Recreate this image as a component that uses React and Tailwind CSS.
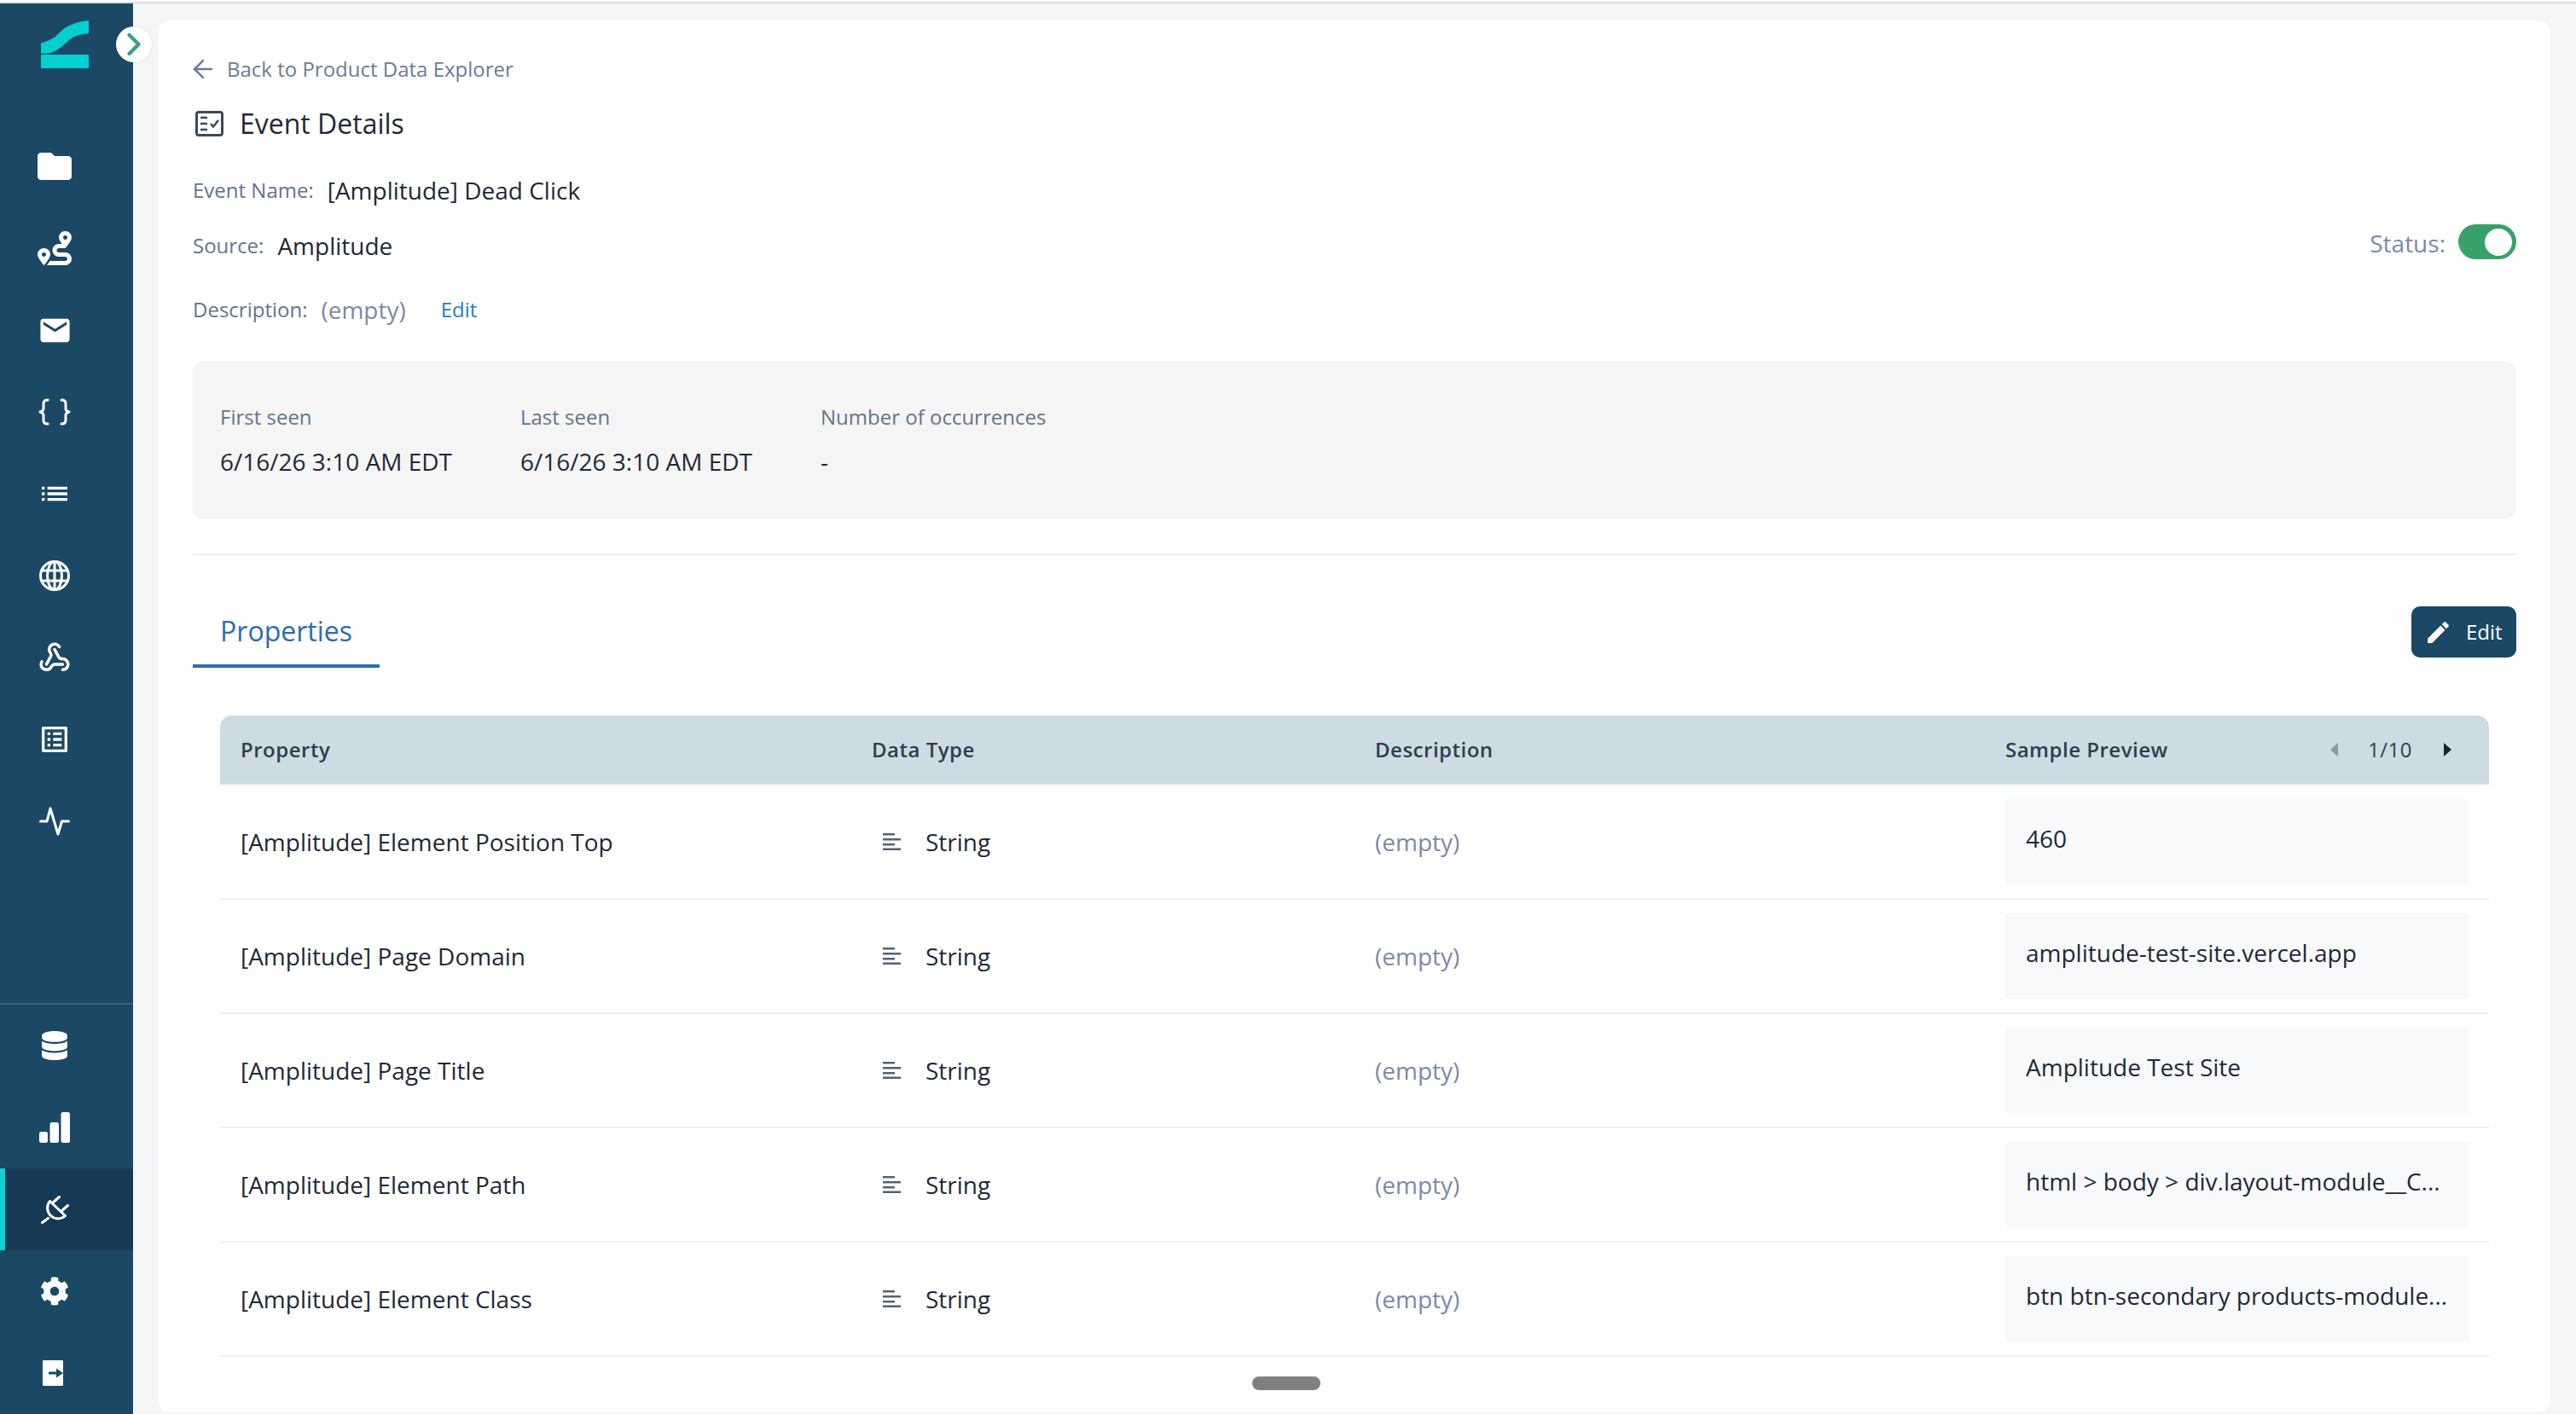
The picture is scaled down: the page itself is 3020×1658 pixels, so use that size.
import { ArrowLeft, ChevronRight, Webhook } from 'lucide-react'
import { FaRoute, FaDatabase, FaCog } from 'react-icons/fa'
import { MdFolder, MdEmail, MdList, MdListAlt, MdEdit } from 'react-icons/md'

const rows = [
  { name: '[Amplitude] Element Position Top', sample: '460' },
  { name: '[Amplitude] Page Domain', sample: 'amplitude-test-site.vercel.app' },
  { name: '[Amplitude] Page Title', sample: 'Amplitude Test Site' },
  { name: '[Amplitude] Element Path', sample: 'html > body > div.layout-module__C...' },
  { name: '[Amplitude] Element Class', sample: 'btn btn-secondary products-module...' },
]

function Logo() {
  return (
    <svg width="56" height="56" viewBox="0 0 56 56" fill="#03d0cf">
      <path d="M0 26.700C8 24 13 22 18 18C26 10 32 3 56 0V15.300C44 16 38 19 32 24C24 31 16 38.700 6 38.700H0Z" />
      <rect x="0" y="40" width="56" height="16" />
    </svg>
  )
}

function Braces() {
  return (
    <svg width="38" height="32" viewBox="0 0 38 32" fill="none" stroke="#fff" strokeWidth="3" strokeLinecap="round" strokeLinejoin="round">
      <path d="M11 2C7 2 6 3.5 6 6V12C6 14 4.5 15.5 2 16C4.5 16.5 6 18 6 20V26C6 28.5 7 30 11 30" />
      <path d="M27 2C31 2 32 3.500 32 6V12C32 14 33.500 15.500 36 16C33.500 16.500 32 18 32 20V26C32 28.500 31 30 27 30" />
    </svg>
  )
}

function Globe() {
  return (
    <svg width="36" height="36" viewBox="0 0 36 36" fill="none" stroke="#fff" strokeWidth="3">
      <circle cx="18" cy="18" r="16.500" />
      <ellipse cx="18" cy="18" rx="8.500" ry="16.500" />
      <path d="M18 2V34M3.500 12H32.500M3.500 24H32.500" />
    </svg>
  )
}

function Pulse() {
  return (
    <svg width="36" height="34" viewBox="0 0 36 34" fill="none" stroke="#fff" strokeWidth="3" strokeLinecap="round" strokeLinejoin="round">
      <path d="M1.500 17H9L13 2L22 32L26.500 17H34.500" />
    </svg>
  )
}

function Bars() {
  return (
    <svg width="36" height="36" viewBox="0 0 36 36" fill="#fff">
      <rect x="0" y="23" width="10" height="13" rx="2.500" />
      <rect x="12.500" y="12" width="10.500" height="24" rx="2.500" />
      <rect x="25.500" y="0" width="10.500" height="36" rx="2.500" />
    </svg>
  )
}

function PlugIcon() {
  return (
    <svg width="33" height="33" viewBox="-1.500 -1.500 33 33" fill="none" stroke="#fff" strokeWidth="3" strokeLinecap="round" strokeLinejoin="round">
      <path d="M27 22A12.400 12.400 0 0 1 9 5Z" />
      <path d="M12 7L20 0M22 17L30 10M7 25L0 30" />
    </svg>
  )
}

function ExitBox() {
  return (
    <svg width="24" height="30" viewBox="0 0 24 30" className="mr-[4px]">
      <rect width="24" height="30" rx="1" fill="#fff" />
      <path d="M7 13.500H16V9.500L24 15L16 20.500V16.500H7Z" fill="#1b4965" />
    </svg>
  )
}

function EventIcon() {
  return (
    <svg width="33" height="30" viewBox="0 0 33 30" fill="none">
      <rect x="1.500" y="1.500" width="30" height="27" rx="2.500" stroke="#3b4a5c" strokeWidth="3" />
      <path d="M6 8H14M6 15H14M6 22H14" stroke="#3b4a5c" strokeWidth="2.500" />
      <path d="M18 15L21 18.500L27 11" stroke="#3b4a5c" strokeWidth="2.500" />
    </svg>
  )
}

function StringIcon() {
  return (
    <svg width="21" height="20" viewBox="0 0 21 20" fill="#556178">
      <rect x="0" y="0" width="14" height="2.500" />
      <rect x="0" y="6" width="21" height="2.500" />
      <rect x="0" y="12" width="14" height="2.500" />
      <rect x="0" y="17.500" width="21" height="2.500" />
    </svg>
  )
}

function Triangle({ left, color }) {
  return (
    <svg width="9" height="16" viewBox="0 0 9 16" fill={color}>
      <path d={left ? 'M9 0V16L0 8Z' : 'M0 0V16L9 8Z'} />
    </svg>
  )
}

function NavItem({ children, active }) {
  return (
    <div className={active ? 'h-[96px] flex items-center justify-center bg-[#163a55] border-l-[6px] border-[#0fd0d0] pr-[34px] text-white' : 'h-[96px] flex items-center justify-center pr-[28px] text-white'}>
      {children}
    </div>
  )
}

function Sidebar() {
  return (
    <aside className="relative w-[156px] shrink-0 bg-[#1b4965] flex flex-col justify-between">
      <div>
        <div className="h-[143px] pt-[20px] pl-[48px]">
          <Logo />
        </div>
        <NavItem><MdFolder size={48} /></NavItem>
        <NavItem><FaRoute size={40} /></NavItem>
        <NavItem><MdEmail size={41} /></NavItem>
        <NavItem><Braces /></NavItem>
        <NavItem><MdList size={40} /></NavItem>
        <NavItem><Globe /></NavItem>
        <NavItem><Webhook size={38} strokeWidth={2.2} /></NavItem>
        <NavItem><MdListAlt size={40} /></NavItem>
        <NavItem><Pulse /></NavItem>
      </div>
      <div className="border-t-2 border-[#3a6280]">
        <NavItem><FaDatabase size={34} /></NavItem>
        <NavItem><Bars /></NavItem>
        <NavItem active><PlugIcon /></NavItem>
        <NavItem><FaCog size={34} /></NavItem>
        <NavItem><ExitBox /></NavItem>
      </div>
      <button className="absolute left-[136px] top-[27px] w-[42px] h-[42px] rounded-full bg-white flex items-center justify-center shadow-[0_0_3px_rgba(30,60,90,0.15)]">
        <ChevronRight size={44} strokeWidth={2.4} className="shrink-0 text-[#3a9d94]" />
      </button>
    </aside>
  )
}

function PropertiesTable() {
  return (
    <div className="mt-[56px] mx-[32px]">
      <div className="grid grid-cols-[764px_590px_739px_567px] h-[82px] bg-[#cddce2] rounded-t-[14px] border-b-2 border-[#e3ecf3] items-center text-[24px] font-semibold text-[#2d3e50] tracking-[0.5px]">
        <div className="pl-[24px]">Property</div>
        <div>Data Type</div>
        <div>Description</div>
        <div className="flex items-center">
          <span className="w-[381px]">Sample Preview</span>
          <span className="w-[44px]"><Triangle left color="#8a9aa5" /></span>
          <span className="w-[89px] font-medium">1/10</span>
          <Triangle color="#1a2433" />
        </div>
      </div>
      {rows.map(r => (
        <div key={r.name} className="grid grid-cols-[764px_590px_739px_567px] h-[134px] border-b-2 border-[#edf1f5] items-center text-[28px] text-[#1f2937]">
          <div className="pl-[24px]">{r.name}</div>
          <div className="flex items-center pl-[13px] gap-[29px]">
            <StringIcon />
            <span>String</span>
          </div>
          <div className="text-[#7c8aa5]">(empty)</div>
          <div className="w-[543px] h-[100px] bg-[#f8f9fb] px-[24px] pt-[25px] whitespace-nowrap overflow-hidden">{r.sample}</div>
        </div>
      ))}
    </div>
  )
}

export default function App() {
  return (
    <div className="w-[3020px] h-[1658px] overflow-hidden bg-[#f4f5f7]" style={{ fontFamily: '"Open Sans", "Noto Sans", sans-serif' }}>
      <div className="h-[4px] bg-white border-b-2 border-[#e0e0e0]" />
      <div className="flex h-[1654px]">
        <Sidebar />
        <main className="flex-1 pl-[30px] pr-[30px] pt-[20px] pb-[2px]">
          <div className="relative h-full bg-white rounded-[14px] px-[40px] pt-[42px] overflow-hidden">
            <div className="h-[30px] flex items-center gap-[11px] -ml-[5px] text-[24px] text-[#6b7c93]">
              <ArrowLeft size={34} strokeWidth={1.8} />
              <span>Back to Product Data Explorer</span>
            </div>
            <div className="mt-[29px] h-[40px] flex items-center gap-[19px] text-[32px] font-medium text-[#1f2937] pl-[3px]">
              <EventIcon />
              <h1>Event Details</h1>
            </div>

            <div className="mt-[38px] h-[40px] flex items-center gap-[16px]">
              <span className="text-[24px] text-[#64748b]">Event Name:</span>
              <span className="text-[28px] text-[#1f2937]">[Amplitude] Dead Click</span>
            </div>
            <div className="mt-[20px] h-[45px] flex justify-between">
              <div className="flex items-center gap-[16px] self-end h-[40px]">
                <span className="text-[24px] text-[#64748b]">Source:</span>
                <span className="text-[28px] text-[#1f2937]">Amplitude</span>
              </div>
              <div className="flex items-center gap-[15px] h-[41px] pt-[2px]">
                <span className="text-[28px] text-[#7c8aa5]">Status:</span>
                <div className="w-[68px] h-[41px] rounded-full bg-[#38a169] flex items-center justify-end pr-[5px] -mt-[2px]">
                  <div className="w-[32px] h-[32px] rounded-full bg-white" />
                </div>
              </div>
            </div>
            <div className="mt-[35px] h-[40px] flex items-center">
              <span className="text-[24px] text-[#64748b]">Description:</span>
              <span className="ml-[16px] text-[28px] text-[#7c8aa5]">(empty)</span>
              <span className="ml-[41px] text-[24px] font-medium text-[#2a7bc8]">Edit</span>
            </div>

            <div className="mt-[41px] h-[184px] bg-[#f5f5f5] rounded-[12px] px-[32px] pt-[50px] grid grid-cols-[352px_352px_352px]">
              {[['First seen', '6/16/26 3:10 AM EDT'], ['Last seen', '6/16/26 3:10 AM EDT'], ['Number of occurrences', '-']].map(([label, value]) => (
                <div key={label}>
                  <div className="h-[30px] leading-[30px] text-[24px] text-[#64748b]">{label}</div>
                  <div className="mt-[22px] h-[30px] leading-[30px] text-[28px] text-[#1f2937]">{value}</div>
                </div>
              ))}
            </div>

            <div className="mt-[41px] h-[2px] bg-[#edf0f3]" />

            <div className="mt-[60px] h-[72px] flex justify-between">
              <div className="w-[219px] h-[72px] border-b-4 border-[#2b6cb0] text-center pt-[8px] text-[32px] leading-[42px] text-[#2b6cb0]">Properties</div>
              <button className="w-[123px] h-[60px] bg-[#1b4965] rounded-[10px] flex items-center pl-[15px] gap-[16px] text-white text-[24px] font-medium">
                <MdEdit size={33} />
                <span>Edit</span>
              </button>
            </div>

            <PropertiesTable />

            <div className="absolute left-[1240px] top-[1579px] w-[163px] h-[38px] bg-[#fdfdfd] flex items-center justify-center">
              <div className="w-[80px] h-[16px] rounded-[8px] bg-[#808080]" />
            </div>
          </div>
        </main>
      </div>
    </div>
  )
}
